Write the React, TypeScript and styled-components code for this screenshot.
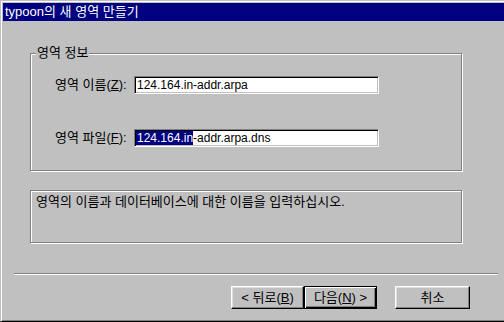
import React from "react";
import styled, { createGlobalStyle } from "styled-components";

const Global = createGlobalStyle`
  html, body {
    margin: 0;
    padding: 0;
    overflow: hidden;
    background: #c0c0c0;
  }
  * { box-sizing: border-box; }
`;

const FONT = `"Liberation Sans", "Noto Sans CJK KR", sans-serif`;

const Window = styled.div`
  width: 512px;
  height: 322px;
  background: #c0c0c0;
  border: 1px solid;
  border-color: #c0c0c0 #000 #000 #c0c0c0;
  box-shadow: inset 1px 1px #fff, inset -1px -1px #808080;
  padding: 2px;
  display: flex;
  flex-direction: column;
  font-family: ${FONT};
  font-size: 13px;
  line-height: 14px;
  color: #000;
`;

const TitleBar = styled.div`
  height: 18px;
  background: #000080;
  color: #fff;
  font-size: 13px;
  line-height: 18px;
  padding-left: 2px;
  white-space: nowrap;
`;

const Body = styled.div`
  display: flex;
  flex-direction: column;
  flex: 1;
`;

const GroupBox = styled.div`
  position: relative;
  margin: 32px 0 0 27px;
  width: 432px;
  height: 118px;
  border: 1px solid #808080;
  box-shadow: inset 1px 1px #fff, 1px 1px #fff;
  padding: 22px 0 0 24px;
  display: flex;
  flex-direction: column;
  gap: 35px;
`;

const Legend = styled.span`
  position: absolute;
  top: -8px;
  left: 5px;
  padding: 0 1px 0 1px;
  background: #c0c0c0;
  white-space: nowrap;
`;

const FieldRow = styled.div`
  display: flex;
  align-items: center;
  height: 18px;
`;

const Label = styled.span`
  width: 79px;
  white-space: nowrap;
`;

const Mnemonic = styled.span`
  text-decoration: underline;
`;

const Edit = styled.div`
  width: 245px;
  height: 18px;
  background: #fff;
  border: 1px solid;
  border-color: #808080 #fff #fff #808080;
  box-shadow: inset 1px 1px #000, inset -1px -1px #c0c0c0;
  padding: 1px 0 0 2px;
  font-size: 12px;
  line-height: 14px;
  white-space: nowrap;
  overflow: hidden;
`;

const Selected = styled.span`
  background: #000080;
  color: #fff;
  margin-left: -1px;
  padding-left: 1px;
`;

const InfoBox = styled.div`
  margin: 19px 0 0 27px;
  width: 432px;
  height: 53px;
  border: 1px solid #808080;
  box-shadow: inset 1px 1px #fff, 1px 1px #fff;
  padding: 4px 0 0 5px;
  white-space: nowrap;
`;

const Separator = styled.div`
  margin: 30px 0 0 11px;
  width: 484px;
  height: 2px;
  border-top: 1px solid #808080;
  border-bottom: 1px solid #fff;
`;

const ButtonRow = styled.div`
  display: flex;
  margin: 11px 0 0 228px;
`;

const Button = styled.div<{ $w: number; $default?: boolean; $gap?: number }>`
  width: ${(p) => p.$w}px;
  height: 23px;
  margin-left: ${(p) => p.$gap ?? 0}px;
  display: flex;
  align-items: center;
  justify-content: center;
  background: #c0c0c0;
  border: 1px solid;
  border-color: ${(p) => (p.$default ? "#000" : "#fff #000 #000 #fff")};
  box-shadow: ${(p) =>
    p.$default
      ? "inset 1px 1px #fff, inset -1px -1px #000, inset -2px -2px #808080"
      : "inset -1px -1px #808080, inset 1px 1px #dfdfdf"};
  white-space: nowrap;
  padding-top: 1px;
`;

export default function App() {
  return (
    <>
      <Global />
      <Window>
        <TitleBar>typoon의 새 영역 만들기</TitleBar>
        <Body>
          <GroupBox>
            <Legend>영역 정보</Legend>
            <FieldRow>
              <Label>
                영역 이름(<Mnemonic>Z</Mnemonic>):
              </Label>
              <Edit>124.164.in-addr.arpa</Edit>
            </FieldRow>
            <FieldRow>
              <Label>
                영역 파일(<Mnemonic>F</Mnemonic>):
              </Label>
              <Edit>
                <Selected>124.164.in</Selected>-addr.arpa.dns
              </Edit>
            </FieldRow>
          </GroupBox>
          <InfoBox>영역의 이름과 데이터베이스에 대한 이름을 입력하십시오.</InfoBox>
          <Separator />
          <ButtonRow>
            <Button $w={73}>
              &lt; 뒤로(<Mnemonic>B</Mnemonic>)
            </Button>
            <Button $w={73} $default>
              다음(<Mnemonic>N</Mnemonic>) &gt;
            </Button>
            <Button $w={75} $gap={18}>
              취소
            </Button>
          </ButtonRow>
        </Body>
      </Window>
    </>
  );
}
